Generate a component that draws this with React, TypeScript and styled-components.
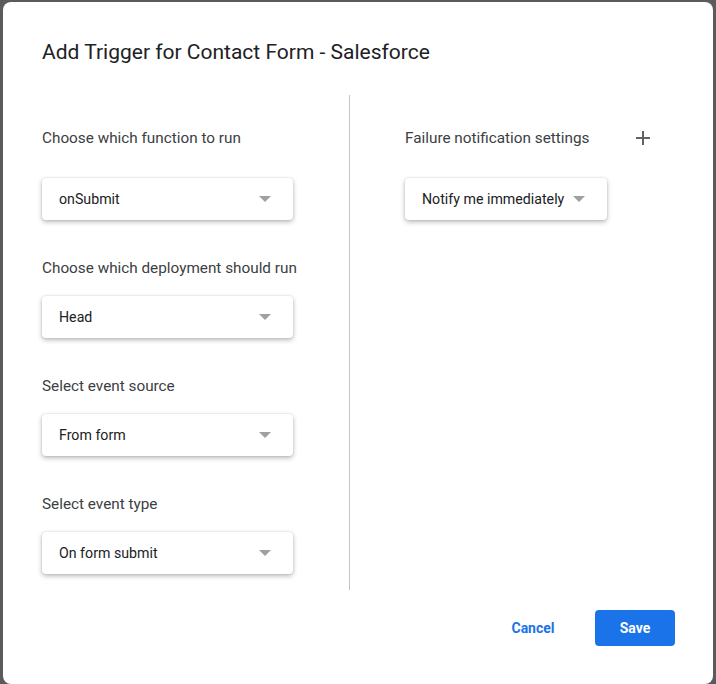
import styled, { createGlobalStyle } from 'styled-components';

const GlobalStyle = createGlobalStyle`
  html, body {
    margin: 0;
    padding: 0;
    background-color: #5b5b5b;
    font-family: Roboto, "Liberation Sans", Arial, sans-serif;
  }
`

const leftFields = [
  { label: 'Choose which function to run', value: 'onSubmit' },
  { label: 'Choose which deployment should run', value: 'Head' },
  { label: 'Select event source', value: 'From form' },
  { label: 'Select event type', value: 'On form submit' },
]

const Select = ({ value, width }: { value: string; width: number }) => (
  <SelectBox $width={width}>
    <SelectValue>{value}</SelectValue>
    <Arrow />
  </SelectBox>
)

const App = () => {
  return (
    <>
      <GlobalStyle />
      <Page>
        <Dialog>
          <Title>Add Trigger for Contact Form - Salesforce</Title>
          <Body>
            <LeftColumn>
              {leftFields.map((f, i) => (
                <Field key={f.label}>
                  <HeaderRow $tall={i === 0}>
                    <Label>{f.label}</Label>
                  </HeaderRow>
                  <Select value={f.value} width={251} />
                </Field>
              ))}
            </LeftColumn>
            <RightColumn>
              <Field>
                <HeaderRow $tall>
                  <Label>Failure notification settings</Label>
                  <PlusButton aria-label="Add">
                    <svg width="14" height="14" viewBox="0 0 14 14">
                      <path d="M7 0v14M0 7h14" stroke="#5f6368" strokeWidth="2" />
                    </svg>
                  </PlusButton>
                </HeaderRow>
                <Select value="Notify me immediately" width={202} />
              </Field>
            </RightColumn>
          </Body>
          <Footer>
            <CancelButton>Cancel</CancelButton>
            <SaveButton>Save</SaveButton>
          </Footer>
        </Dialog>
      </Page>
    </>
  )
}

const Page = styled.div`
  width: 716px;
  height: 684px;
  overflow: hidden;
  padding: 2px 3px 0 3px;
  box-sizing: border-box;
`

const Dialog = styled.div`
  background-color: #fff;
  border-radius: 8px;
  height: 682px;
  box-sizing: border-box;
  padding: 36px 38px 0 39px;
  display: flex;
  flex-direction: column;
`

const Title = styled.div`
  font-size: 21px;
  line-height: 28px;
  color: #202124;
  margin-bottom: 29px;
`

const Body = styled.div`
  display: flex;
`

const LeftColumn = styled.div`
  width: 307px;
  border-right: 1px solid #c4c4c4;
  padding-top: 21px;
  padding-bottom: 16px;
  display: flex;
  flex-direction: column;
  gap: 38px;
`

const RightColumn = styled.div`
  padding-top: 21px;
  padding-left: 55px;
`

const Field = styled.div`
  display: flex;
  flex-direction: column;
  gap: 18px;
`

const HeaderRow = styled.div<{ $tall?: boolean }>`
  display: flex;
  align-items: center;
  justify-content: space-between;
  height: ${(p) => (p.$tall ? '44px' : '20px')};
  width: 245px;
`

const Label = styled.div`
  font-size: 15.3px;
  line-height: 20px;
  color: #3c4043;
  white-space: nowrap;
`

const PlusButton = styled.div`
  display: flex;
  align-items: center;
  justify-content: center;
  width: 14px;
  height: 14px;
`

const SelectBox = styled.div<{ $width: number }>`
  width: ${(p) => p.$width}px;
  height: 42px;
  box-sizing: border-box;
  padding: 0 22px 0 17px;
  display: flex;
  align-items: center;
  justify-content: space-between;
  background-color: #fff;
  border-radius: 4px;
  box-shadow: 0 2px 5px rgba(0, 0, 0, 0.28), 0 0 2px rgba(0, 0, 0, 0.12);
`

const SelectValue = styled.span`
  font-size: 14.2px;
  color: #202124;
`

const Arrow = styled.span`
  width: 0;
  height: 0;
  border-left: 6px solid transparent;
  border-right: 6px solid transparent;
  border-top: 6px solid #a0a0a0;
`

const Footer = styled.div`
  display: flex;
  justify-content: flex-end;
  align-items: center;
  gap: 22px;
  margin-top: 20px;
`

const CancelButton = styled.button`
  width: 80px;
  height: 36px;
  border: none;
  background: none;
  color: #1a73e8;
  font-family: Roboto, "Liberation Sans", Arial, sans-serif;
  font-size: 14px;
  font-weight: 700;
`

const SaveButton = styled.button`
  width: 80px;
  height: 36px;
  border: none;
  border-radius: 4px;
  background-color: #1a73e8;
  color: #fff;
  font-family: Roboto, "Liberation Sans", Arial, sans-serif;
  font-size: 14px;
  font-weight: 700;
`

export default App
